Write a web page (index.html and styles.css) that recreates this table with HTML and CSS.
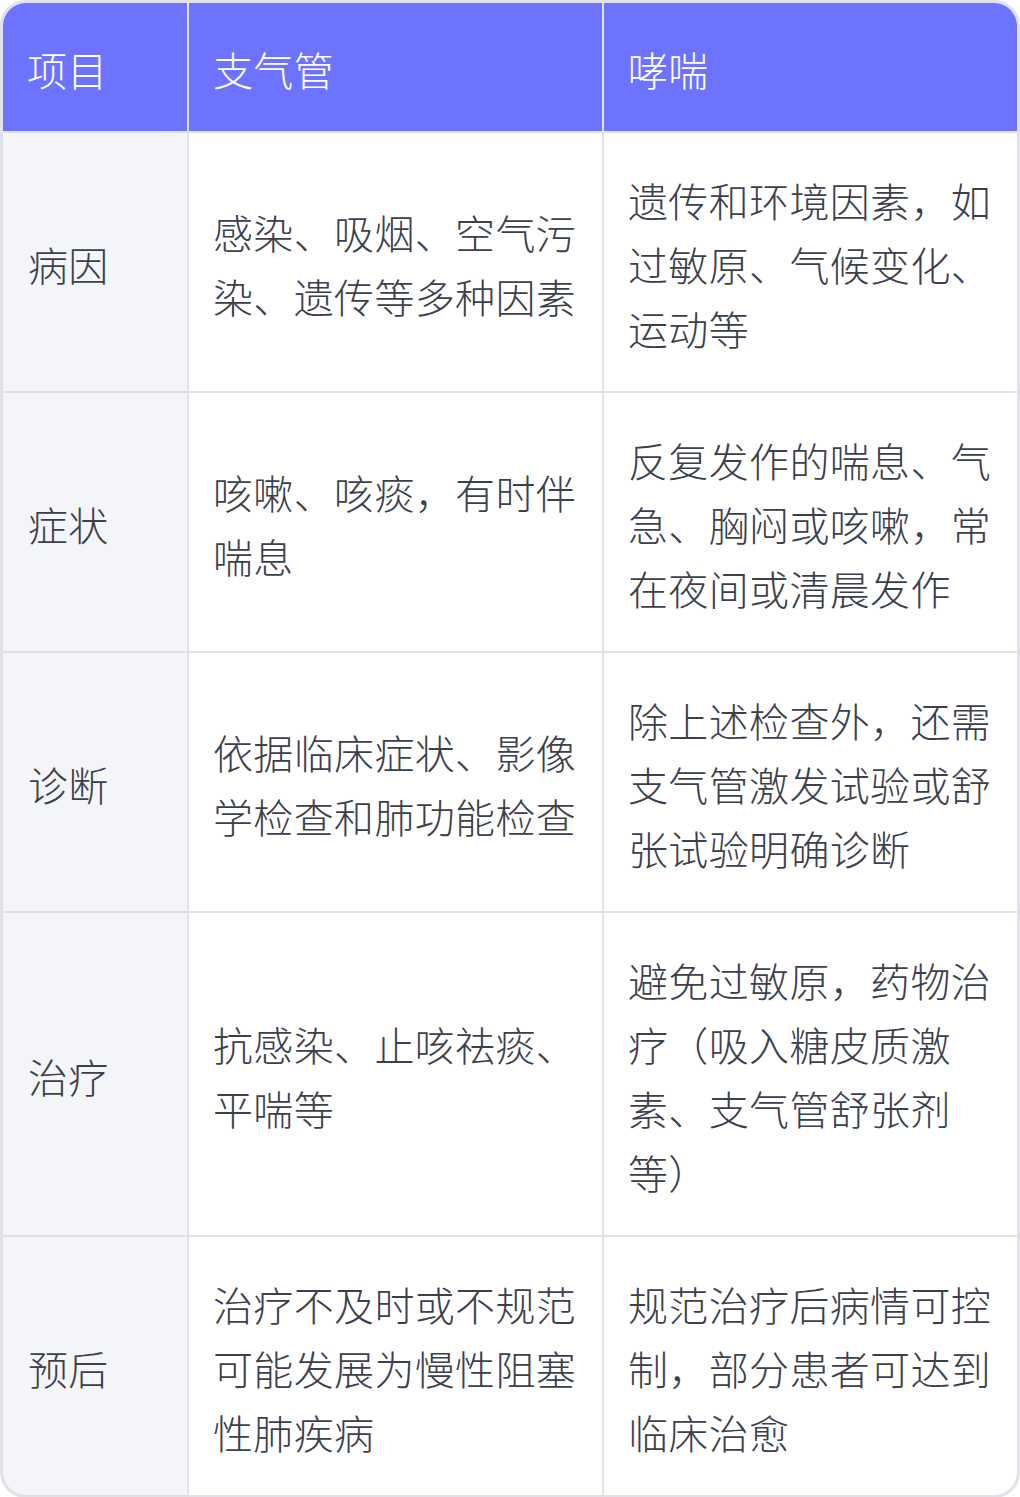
FILE: index.html
```html
<!DOCTYPE html>
<html lang="zh-CN">
<head>
<meta charset="utf-8">
<link rel="stylesheet" href="styles.css">
</head>
<body>
<div class="table">
  <div class="cell head">项目</div>
  <div class="cell head">支气管</div>
  <div class="cell head">哮喘</div>

  <div class="cell key">病因</div>
  <div class="cell">感染、吸烟、空气污染、遗传等多种因素</div>
  <div class="cell">遗传和环境因素，如过敏原、气候变化、运动等</div>

  <div class="cell key">症状</div>
  <div class="cell">咳嗽、咳痰，有时伴喘息</div>
  <div class="cell">反复发作的喘息、气急、胸闷或咳嗽，常在夜间或清晨发作</div>

  <div class="cell key">诊断</div>
  <div class="cell">依据临床症状、影像学检查和肺功能检查</div>
  <div class="cell">除上述检查外，还需支气管激发试验或舒张试验明确诊断</div>

  <div class="cell key">治疗</div>
  <div class="cell">抗感染、止咳祛痰、平喘等</div>
  <div class="cell">避免过敏原，药物治疗（吸入糖皮质激素、支气管舒张剂等）</div>

  <div class="cell key">预后</div>
  <div class="cell">治疗不及时或不规范可能发展为慢性阻塞性肺疾病</div>
  <div class="cell">规范治疗后病情可控制，部分患者可达到临床治愈</div>
</div>
</body>
</html>
```

FILE: styles.css
```css
html, body {
  margin: 0;
  padding: 0;
  background: #ffffff;
}

.table {
  width: 1020px;
  box-sizing: border-box;
  border: 3px solid #e1e2e7;
  border-radius: 26px;
  overflow: hidden;
  display: grid;
  grid-template-columns: 184px 413px 413px;
  gap: 2px;
  background: #e1e2e7;
  font-family: "Noto Sans CJK SC", "Noto Sans", sans-serif;
  font-size: 40px;
  font-weight: 300;
  line-height: 64px;
  letter-spacing: 0.35px;
  color: #3c404c;
}

.cell {
  background: #ffffff;
  padding: 35px 24px 31px;
  display: flex;
  align-items: center;
}

.cell.head {
  background: #6d73ff;
  color: #ffffff;
  padding: 34px 24px 30px;
}

.cell.key {
  background: #f4f5f9;
  padding-left: 25px;
}
```
